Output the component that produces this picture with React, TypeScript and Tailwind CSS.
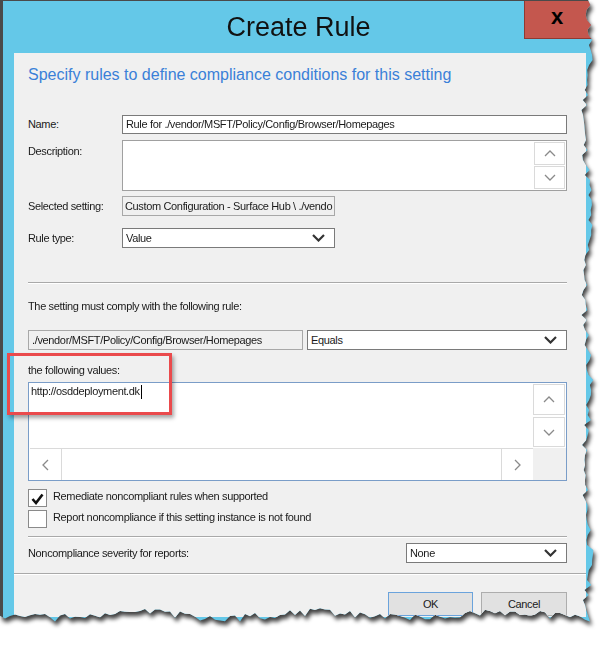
import React from 'react';

// jagged "torn paper" outline for the dialog (right + bottom edges)
function tornClip(): string {
  let seed = 11;
  const rnd = () => {
    seed = (seed * 9301 + 49297) % 233280;
    return seed / 233280;
  };
  const pts: string[] = ['0px 0px'];
  for (let y = 0; y <= 614; y += 5) {
    const x = 587 + Math.sin(y / 27) * 3 + (rnd() - 0.5) * 7;
    pts.push(`${x.toFixed(1)}px ${y}px`);
  }
  for (let x = 590; x >= 0; x -= 5) {
    const y = 615 + Math.sin(x / 29) * 3 + (rnd() - 0.5) * 8;
    pts.push(`${x}px ${y.toFixed(1)}px`);
  }
  return `polygon(${pts.join(',')})`;
}

const DropChevron = () => (
  <svg width="13" height="8" viewBox="0 0 13 8">
    <polyline points="1,1 6.5,6.5 12,1" fill="none" stroke="#333" strokeWidth="2.2" />
  </svg>
);

const ScrollArrow = ({ dir }: { dir: 'up' | 'down' | 'left' | 'right' }) => {
  const pts = {
    up: '1,6 6,1 11,6',
    down: '1,1 6,6 11,1',
    left: '6,1 1,6 6,11',
    right: '1,1 6,6 1,11',
  }[dir];
  const vertical = dir === 'up' || dir === 'down';
  return (
    <svg width={vertical ? 12 : 7} height={vertical ? 7 : 12} viewBox={vertical ? '0 0 12 7' : '0 0 7 12'}>
      <polyline points={pts} fill="none" stroke="#8a8a8a" strokeWidth="1.3" />
    </svg>
  );
};

const Dropdown = ({ value, className }: { value: string; className: string }) => (
  <div className={`flex items-center justify-between h-[20px] bg-white border border-[#7a7a7a] pl-[3px] pr-[9px] ${className}`}>
    <span>{value}</span>
    <DropChevron />
  </div>
);

const CheckBox = ({ checked, label }: { checked?: boolean; label: string }) => (
  <div className="flex items-start h-[19px]">
    <div className="w-[19px] h-[18px] bg-white border border-[#8a8a8a] flex items-end justify-center pb-[1px]">
      {checked && (
        <svg width="13" height="12" viewBox="0 0 13 12">
          <polyline points="1.5,6 5,10 11.5,1.5" fill="none" stroke="#111" strokeWidth="2.6" />
        </svg>
      )}
    </div>
    <span className="ml-[6px] -mt-[1px]">{label}</span>
  </div>
);

export default function App() {
  return (
    <div className="relative w-[616px] h-[651px] bg-white overflow-hidden font-['Liberation_Sans',Arial,sans-serif] text-[11px] tracking-[-0.35px] text-[#1a1a1a]">
      <div className="drop-shadow-[2px_4px_2px_rgba(0,0,0,0.75)]">
        <div
          className="w-[600px] h-[632px] bg-[#64c8e8] border-l-[3px] border-l-[#4a4a4a] border-t border-t-[#4a4a4a]"
          style={{ clipPath: tornClip() }}
        >
          {/* title bar */}
          <div className="relative h-[52px]">
            <div className="pt-[11px] text-center text-[27px] leading-[31px] tracking-normal text-[#111] -ml-[3px] pr-[3px]">
              Create Rule
            </div>
            <div className="absolute top-0 left-[521px] w-[80px] h-[38px] bg-[#c4574e] border-l border-b border-[#8f3a33] flex items-start pl-[26px] pt-[5px]">
              <span className="text-[22px] leading-[22px] font-bold text-black tracking-normal">x</span>
            </div>
          </div>

          {/* content panel */}
          <div className="ml-[11px] w-[572px] h-[564px] bg-[#f0f0f0] pl-[14px] pr-[19px] flex flex-col">
            <div className="mt-[12px] text-[16px] leading-[20px] tracking-normal text-[#3a80d8]">
              Specify rules to define compliance conditions for this setting
            </div>

            <div className="mt-[30px] flex items-center h-[19px]">
              <span className="w-[94px]">Name:</span>
              <div className="flex-1 h-full bg-white border border-[#7a7a7a] pl-[3px] leading-[17px] whitespace-nowrap overflow-hidden">
                Rule for ./vendor/MSFT/Policy/Config/Browser/Homepages
              </div>
            </div>

            <div className="mt-[6px] flex items-start h-[51px]">
              <span className="w-[94px] pt-[3px]">Description:</span>
              <div className="flex-1 h-full bg-white border border-[#a0a0a0] flex justify-end">
                <div className="w-[33px] flex flex-col p-px gap-px">
                  <div className="h-[23px] border border-[#dadada] flex items-center justify-center">
                    <ScrollArrow dir="up" />
                  </div>
                  <div className="flex-1 border border-[#dadada] flex items-center justify-center">
                    <ScrollArrow dir="down" />
                  </div>
                </div>
              </div>
            </div>

            <div className="mt-[5px] flex items-center h-[20px]">
              <span className="w-[94px]">Selected setting:</span>
              <div className="w-[213px] h-full bg-[#f0f0f0] border border-[#a8a8a8] pl-[2px] leading-[18px] whitespace-nowrap overflow-hidden">
                Custom Configuration - Surface Hub \ ./vendo
              </div>
            </div>

            <div className="mt-[12px] flex items-center h-[20px]">
              <span className="w-[94px]">Rule type:</span>
              <Dropdown value="Value" className="w-[213px]" />
            </div>

            <div className="mt-[34px] h-[2px] border-t border-[#a9a9a9] border-b border-b-white" />

            <div className="mt-[14px] leading-[16px]">The setting must comply with the following rule:</div>

            <div className="mt-[16px] flex items-center gap-[4px] h-[20px]">
              <div className="w-[275px] h-full bg-[#f0f0f0] border border-[#a8a8a8] pl-[3px] leading-[18px] whitespace-nowrap overflow-hidden">
                ./vendor/MSFT/Policy/Config/Browser/Homepages
              </div>
              <Dropdown value="Equals" className="flex-1" />
            </div>

            <div className="mt-[12px] leading-[16px]">the following values:</div>

            <div className="mt-[4px] h-[99px] bg-white border border-[#7a9dc8] flex flex-col">
              <div className="flex h-[65px]">
                <div className="flex-1 pl-[2px] pt-[1px] leading-[15px] flex items-start">
                  <span>http://osddeployment.dk</span>
                  <span className="ml-[1px] mt-[1px] w-px h-[14px] bg-black" />
                </div>
                <div className="w-[33px] flex flex-col gap-[2px] py-px pr-px">
                  <div className="h-[31px] border border-[#dadada] flex items-center justify-center">
                    <ScrollArrow dir="up" />
                  </div>
                  <div className="flex-1 border border-[#dadada] flex items-center justify-center">
                    <ScrollArrow dir="down" />
                  </div>
                </div>
              </div>
              <div className="flex-1 flex">
                <div className="flex-1 flex border-t border-[#dadada] ml-px">
                  <div className="w-[32px] border-r border-[#dadada] flex items-center justify-center">
                    <ScrollArrow dir="left" />
                  </div>
                  <div className="flex-1" />
                  <div className="w-[32px] border-l border-[#dadada] flex items-center justify-center">
                    <ScrollArrow dir="right" />
                  </div>
                </div>
                <div className="w-[33px] bg-[#f0f0f0]" />
              </div>
            </div>

            <div className="mt-[8px]">
              <CheckBox checked label="Remediate noncompliant rules when supported" />
            </div>
            <div className="mt-[2px]">
              <CheckBox label="Report noncompliance if this setting instance is not found" />
            </div>

            <div className="mt-[7px] h-[2px] border-t border-[#a9a9a9] border-b border-b-white" />

            <div className="mt-[5px] flex items-center justify-between h-[20px]">
              <span>Noncompliance severity for reports:</span>
              <Dropdown value="None" className="w-[161px]" />
            </div>

            <div className="mt-[10px] -ml-[14px] -mr-[19px] h-[2px] border-t border-[#a9a9a9] border-b border-b-white" />

            <div className="mt-[17px] flex justify-end gap-[8px]">
              <div className="w-[85px] h-[24px] bg-[#e1e1e1] border border-[#6aa3dc] flex items-center justify-center">OK</div>
              <div className="w-[86px] h-[24px] bg-[#e1e1e1] border border-[#adadad] flex items-center justify-center">Cancel</div>
            </div>
          </div>
        </div>
      </div>

      {/* red annotation box */}
      <div className="absolute left-[7px] top-[353px] w-[165px] h-[62px] border-[3px] border-[#ea4a4c] shadow-[2px_3px_4px_rgba(0,0,0,0.35)]" />
    </div>
  );
}
